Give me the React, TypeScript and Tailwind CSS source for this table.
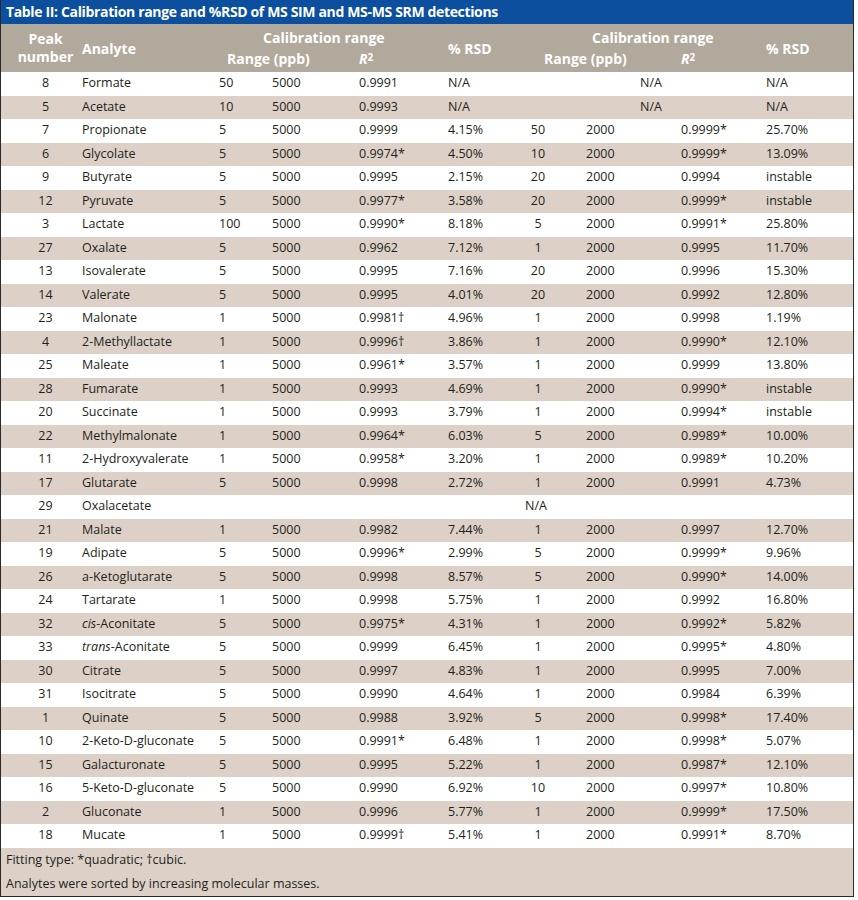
import React from 'react';

type Row = {
  peak: string;
  name: React.ReactNode;
  lo?: string;
  hi?: string;
  r2?: string;
  rsd?: string;
  lo2?: string;
  hi2?: string;
  r22?: string;
  rsd2?: string;
  // special layouts for the N/A rows
  naSpan?: boolean;
  naOnly?: boolean;
};

const rows: Row[] = [
  { peak: '8', name: 'Formate', lo: '50', hi: '5000', r2: '0.9991', rsd: 'N/A', naSpan: true, rsd2: 'N/A' },
  { peak: '5', name: 'Acetate', lo: '10', hi: '5000', r2: '0.9993', rsd: 'N/A', naSpan: true, rsd2: 'N/A' },
  { peak: '7', name: 'Propionate', lo: '5', hi: '5000', r2: '0.9999', rsd: '4.15%', lo2: '50', hi2: '2000', r22: '0.9999*', rsd2: '25.70%' },
  { peak: '6', name: 'Glycolate', lo: '5', hi: '5000', r2: '0.9974*', rsd: '4.50%', lo2: '10', hi2: '2000', r22: '0.9999*', rsd2: '13.09%' },
  { peak: '9', name: 'Butyrate', lo: '5', hi: '5000', r2: '0.9995', rsd: '2.15%', lo2: '20', hi2: '2000', r22: '0.9994', rsd2: 'instable' },
  { peak: '12', name: 'Pyruvate', lo: '5', hi: '5000', r2: '0.9977*', rsd: '3.58%', lo2: '20', hi2: '2000', r22: '0.9999*', rsd2: 'instable' },
  { peak: '3', name: 'Lactate', lo: '100', hi: '5000', r2: '0.9990*', rsd: '8.18%', lo2: '5', hi2: '2000', r22: '0.9991*', rsd2: '25.80%' },
  { peak: '27', name: 'Oxalate', lo: '5', hi: '5000', r2: '0.9962', rsd: '7.12%', lo2: '1', hi2: '2000', r22: '0.9995', rsd2: '11.70%' },
  { peak: '13', name: 'Isovalerate', lo: '5', hi: '5000', r2: '0.9995', rsd: '7.16%', lo2: '20', hi2: '2000', r22: '0.9996', rsd2: '15.30%' },
  { peak: '14', name: 'Valerate', lo: '5', hi: '5000', r2: '0.9995', rsd: '4.01%', lo2: '20', hi2: '2000', r22: '0.9992', rsd2: '12.80%' },
  { peak: '23', name: 'Malonate', lo: '1', hi: '5000', r2: '0.9981†', rsd: '4.96%', lo2: '1', hi2: '2000', r22: '0.9998', rsd2: '1.19%' },
  { peak: '4', name: '2-Methyllactate', lo: '1', hi: '5000', r2: '0.9996†', rsd: '3.86%', lo2: '1', hi2: '2000', r22: '0.9990*', rsd2: '12.10%' },
  { peak: '25', name: 'Maleate', lo: '1', hi: '5000', r2: '0.9961*', rsd: '3.57%', lo2: '1', hi2: '2000', r22: '0.9999', rsd2: '13.80%' },
  { peak: '28', name: 'Fumarate', lo: '1', hi: '5000', r2: '0.9993', rsd: '4.69%', lo2: '1', hi2: '2000', r22: '0.9990*', rsd2: 'instable' },
  { peak: '20', name: 'Succinate', lo: '1', hi: '5000', r2: '0.9993', rsd: '3.79%', lo2: '1', hi2: '2000', r22: '0.9994*', rsd2: 'instable' },
  { peak: '22', name: 'Methylmalonate', lo: '1', hi: '5000', r2: '0.9964*', rsd: '6.03%', lo2: '5', hi2: '2000', r22: '0.9989*', rsd2: '10.00%' },
  { peak: '11', name: '2-Hydroxyvalerate', lo: '1', hi: '5000', r2: '0.9958*', rsd: '3.20%', lo2: '1', hi2: '2000', r22: '0.9989*', rsd2: '10.20%' },
  { peak: '17', name: 'Glutarate', lo: '5', hi: '5000', r2: '0.9998', rsd: '2.72%', lo2: '1', hi2: '2000', r22: '0.9991', rsd2: '4.73%' },
  { peak: '29', name: 'Oxalacetate', naOnly: true },
  { peak: '21', name: 'Malate', lo: '1', hi: '5000', r2: '0.9982', rsd: '7.44%', lo2: '1', hi2: '2000', r22: '0.9997', rsd2: '12.70%' },
  { peak: '19', name: 'Adipate', lo: '5', hi: '5000', r2: '0.9996*', rsd: '2.99%', lo2: '5', hi2: '2000', r22: '0.9999*', rsd2: '9.96%' },
  { peak: '26', name: 'a-Ketoglutarate', lo: '5', hi: '5000', r2: '0.9998', rsd: '8.57%', lo2: '5', hi2: '2000', r22: '0.9990*', rsd2: '14.00%' },
  { peak: '24', name: 'Tartarate', lo: '1', hi: '5000', r2: '0.9998', rsd: '5.75%', lo2: '1', hi2: '2000', r22: '0.9992', rsd2: '16.80%' },
  { peak: '32', name: <><i>cis</i>-Aconitate</>, lo: '5', hi: '5000', r2: '0.9975*', rsd: '4.31%', lo2: '1', hi2: '2000', r22: '0.9992*', rsd2: '5.82%' },
  { peak: '33', name: <><i>trans</i>-Aconitate</>, lo: '5', hi: '5000', r2: '0.9999', rsd: '6.45%', lo2: '1', hi2: '2000', r22: '0.9995*', rsd2: '4.80%' },
  { peak: '30', name: 'Citrate', lo: '5', hi: '5000', r2: '0.9997', rsd: '4.83%', lo2: '1', hi2: '2000', r22: '0.9995', rsd2: '7.00%' },
  { peak: '31', name: 'Isocitrate', lo: '5', hi: '5000', r2: '0.9990', rsd: '4.64%', lo2: '1', hi2: '2000', r22: '0.9984', rsd2: '6.39%' },
  { peak: '1', name: 'Quinate', lo: '5', hi: '5000', r2: '0.9988', rsd: '3.92%', lo2: '5', hi2: '2000', r22: '0.9998*', rsd2: '17.40%' },
  { peak: '10', name: '2-Keto-D-gluconate', lo: '5', hi: '5000', r2: '0.9991*', rsd: '6.48%', lo2: '1', hi2: '2000', r22: '0.9998*', rsd2: '5.07%' },
  { peak: '15', name: 'Galacturonate', lo: '5', hi: '5000', r2: '0.9995', rsd: '5.22%', lo2: '1', hi2: '2000', r22: '0.9987*', rsd2: '12.10%' },
  { peak: '16', name: '5-Keto-D-gluconate', lo: '5', hi: '5000', r2: '0.9990', rsd: '6.92%', lo2: '10', hi2: '2000', r22: '0.9997*', rsd2: '10.80%' },
  { peak: '2', name: 'Gluconate', lo: '1', hi: '5000', r2: '0.9996', rsd: '5.77%', lo2: '1', hi2: '2000', r22: '0.9999*', rsd2: '17.50%' },
  { peak: '18', name: 'Mucate', lo: '1', hi: '5000', r2: '0.9999†', rsd: '5.41%', lo2: '1', hi2: '2000', r22: '0.9991*', rsd2: '8.70%' },
];

const R2 = () => (
  <span>
    <i>R</i>
    <span className="relative -top-[3px] text-[10px]">2</span>
  </span>
);

export default function App() {
  return (
    <div className="bg-white w-[858px] h-[900px]" style={{ fontFamily: '"Open Sans", "Noto Sans", sans-serif' }}>
      <div className="w-[854px] border border-[#2a2a2a] border-t-0">
        {/* title bar */}
        <div className="h-[24px] bg-[#0b4f9e] text-white font-bold text-[14px] leading-[24px] pl-[5px] tracking-[-0.35px]">
          Table II: Calibration range and %RSD of MS SIM and MS-MS SRM detections
        </div>

        <table className="table-fixed border-collapse w-full text-[12.5px] text-[#231f20]">
          <colgroup>
            <col className="w-[81px]" />
            <col className="w-[137px]" />
            <col className="w-[53px]" />
            <col className="w-[87px]" />
            <col className="w-[89px]" />
            <col className="w-[67px]" />
            <col className="w-[71px]" />
            <col className="w-[95px]" />
            <col className="w-[85px]" />
            <col />
          </colgroup>
          <thead className="bg-[#b2a99d] text-white font-bold text-[14px]">
            <tr className="h-[23px]">
              <th rowSpan={2} className="pl-[8px] text-center leading-[18px] font-bold">
                Peak<br />number
              </th>
              <th rowSpan={2} className="text-left font-bold">Analyte</th>
              <th colSpan={3} className="text-left pl-[44px] pt-[3px] font-bold">Calibration range</th>
              <th rowSpan={2} className="text-left font-bold">% RSD</th>
              <th colSpan={3} className="text-left pl-[77px] pt-[3px] font-bold">Calibration range</th>
              <th rowSpan={2} className="text-left font-bold">% RSD</th>
            </tr>
            <tr className="h-[24px]">
              <th colSpan={2} className="text-left pl-[8px] pb-[3px] font-bold">Range (ppb)</th>
              <th className="text-left pb-[3px] font-bold"><R2 /></th>
              <th colSpan={2} className="text-left pl-[29px] pb-[3px] font-bold">Range (ppb)</th>
              <th className="text-left pb-[3px] font-bold"><R2 /></th>
            </tr>
          </thead>
          <tbody>
            {rows.map((r, i) => (
              <tr key={r.peak} className={`h-[23.5px] ${i % 2 === 1 ? 'bg-[#ddd1c7]' : 'bg-white'}`}>
                <td className="pl-[8px] text-center">{r.peak}</td>
                <td>{r.name}</td>
                {r.naOnly ? (
                  <>
                    <td colSpan={4} />
                    <td className="pl-[10px]">N/A</td>
                    <td colSpan={3} />
                  </>
                ) : (
                  <>
                    <td>{r.lo}</td>
                    <td>{r.hi}</td>
                    <td>{r.r2}</td>
                    <td>{r.rsd}</td>
                    {r.naSpan ? (
                      <td colSpan={3} className="pl-[125px]">N/A</td>
                    ) : (
                      <>
                        <td className="text-center pr-[25px]">{r.lo2}</td>
                        <td>{r.hi2}</td>
                        <td>{r.r22}</td>
                      </>
                    )}
                    <td>{r.rsd2}</td>
                  </>
                )}
              </tr>
            ))}
          </tbody>
        </table>

        {/* notes */}
        <div className="bg-[#ddd1c7] text-[12.5px] text-[#231f20] pl-[5px]">
          <div className="h-[24px] leading-[24px]">Fitting type: *quadratic; †cubic.</div>
          <div className="h-[24px] leading-[24px]">Analytes were sorted by increasing molecular masses.</div>
        </div>
      </div>
    </div>
  );
}
